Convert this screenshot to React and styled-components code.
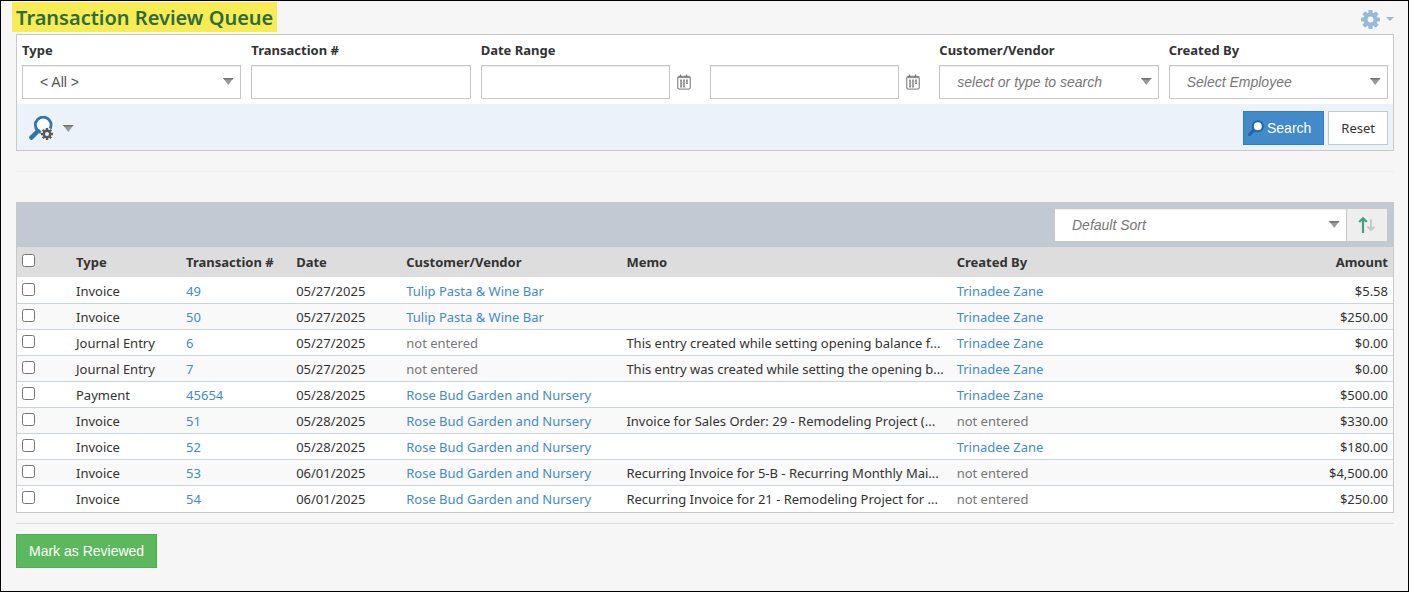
import { useState } from 'react';
import styled, { createGlobalStyle } from 'styled-components';

const colors = {
  link: '#428bca',
  text: '#333',
  muted: '#777',
  border: '#c8c8c8',
};

const bodyFont = '"Noto Sans", "Open Sans", sans-serif';
const controlFont = '"Liberation Sans", Arial, sans-serif';

const transactions = [
  { type: 'Invoice', number: '49', date: '05/27/2025', customer: 'Tulip Pasta & Wine Bar', memo: '', createdBy: 'Trinadee Zane', amount: '$5.58' },
  { type: 'Invoice', number: '50', date: '05/27/2025', customer: 'Tulip Pasta & Wine Bar', memo: '', createdBy: 'Trinadee Zane', amount: '$250.00' },
  { type: 'Journal Entry', number: '6', date: '05/27/2025', customer: '', memo: 'This entry created while setting opening balance f...', createdBy: 'Trinadee Zane', amount: '$0.00' },
  { type: 'Journal Entry', number: '7', date: '05/27/2025', customer: '', memo: 'This entry was created while setting the opening b...', createdBy: 'Trinadee Zane', amount: '$0.00' },
  { type: 'Payment', number: '45654', date: '05/28/2025', customer: 'Rose Bud Garden and Nursery', memo: '', createdBy: 'Trinadee Zane', amount: '$500.00' },
  { type: 'Invoice', number: '51', date: '05/28/2025', customer: 'Rose Bud Garden and Nursery', memo: 'Invoice for Sales Order: 29 - Remodeling Project (...', createdBy: '', amount: '$330.00' },
  { type: 'Invoice', number: '52', date: '05/28/2025', customer: 'Rose Bud Garden and Nursery', memo: '', createdBy: 'Trinadee Zane', amount: '$180.00' },
  { type: 'Invoice', number: '53', date: '06/01/2025', customer: 'Rose Bud Garden and Nursery', memo: 'Recurring Invoice for 5-B - Recurring Monthly Mai...', createdBy: '', amount: '$4,500.00' },
  { type: 'Invoice', number: '54', date: '06/01/2025', customer: 'Rose Bud Garden and Nursery', memo: 'Recurring Invoice for 21 - Remodeling Project for ...', createdBy: '', amount: '$250.00' },
];

function GearIcon({ size, color, hole }) {
  return (
    <svg width={size} height={size} viewBox="0 0 20 20" aria-hidden="true">
      <g fill={color}>
        <circle cx="10" cy="10" r="7.4" />
        {[0, 45, 90, 135].map((angle) => (
          <rect key={angle} x="7.8" y="0" width="4.4" height="20" rx="0.8" transform={`rotate(${angle} 10 10)`} />
        ))}
      </g>
      <circle cx="10" cy="10" r="3.1" fill={hole} />
    </svg>
  );
}

function ArrowIcon() {
  return (
    <svg width="11" height="7" viewBox="0 0 11 7" aria-hidden="true">
      <path d="M0 0H10.5L5.25 7Z" fill="#999" />
      <path d="M0 0H10.5L9.4 1.5H1.1Z" fill="#707070" />
    </svg>
  );
}

function CalendarIcon() {
  return (
    <svg width="14" height="16" viewBox="0 0 14 16" aria-hidden="true">
      <rect x="0.7" y="2.5" width="12.6" height="12.6" rx="1.8" fill="#fff" stroke="#929292" strokeWidth="1.3" />
      <path d="M1 3.2H13" stroke="#8c8c8c" strokeWidth="1.8" />
      <path d="M3.5 0.5V3M9.5 0.5V3" stroke="#777" strokeWidth="1.3" />
      <path d="M4 5.5V13.5M7 5.5V13.5M10 5.5V10" stroke="#8a8a8a" strokeWidth="1.8" />
      <path d="M3 8.2H11M3 10.9H8" stroke="#c2c2c2" strokeWidth="0.8" />
    </svg>
  );
}

function AdvancedSearchIcon() {
  return (
    <svg width="24" height="24" viewBox="0 0 24 24" aria-hidden="true">
      <circle cx="14.2" cy="9" r="7.9" fill="#fff" stroke="#3572b0" strokeWidth="2.8" />
      <path d="M2.4 21.6L9 15" stroke="#3572b0" strokeWidth="4.4" strokeLinecap="round" />
      <circle cx="18" cy="18" r="6.4" fill="#ecf3fb" />
      <g fill="#5a5a5a">
        <circle cx="18" cy="18" r="4.4" />
        {[0, 45, 90, 135].map((angle) => (
          <rect key={angle} x="16.8" y="12" width="2.4" height="12" transform={`rotate(${angle} 18 18)`} />
        ))}
      </g>
      <circle cx="18" cy="18" r="2" fill="#ecf3fb" />
    </svg>
  );
}

function SearchIcon() {
  return (
    <svg width="16" height="16" viewBox="0 0 16 16" aria-hidden="true">
      <path d="M1.5 14.5L5.6 10.4" stroke="#2463a8" strokeWidth="3" strokeLinecap="round" />
      <circle cx="9.8" cy="6.2" r="5" fill="#fff" stroke="#2463a8" strokeWidth="2" />
    </svg>
  );
}

function SortIcon() {
  return (
    <svg width="18" height="18" viewBox="0 0 18 18" aria-hidden="true">
      <path d="M5 17V2M1.2 6L5 2.2L8.8 6" fill="none" stroke="#43a07a" strokeWidth="2.2" />
      <path d="M13 3.5V14M9.5 10.5L13 14L16.5 10.5" fill="none" stroke="#c8c8c8" strokeWidth="2" />
    </svg>
  );
}

function App() {
  const [selected, updateSelected] = useState([]);
  const allSelected = selected.length === transactions.length;

  const toggleAll = () => {
    updateSelected(allSelected ? [] : transactions.map((item) => item.number));
  };

  const toggleRow = (number) => {
    if (selected.includes(number)) {
      updateSelected(selected.filter((item) => item !== number));
    } else {
      updateSelected([...selected, number]);
    }
  };

  return (
    <Page>
      <GlobalStyle />
      <PageHeader>
        <PageTitle>Transaction Review Queue</PageTitle>
        <SettingsButton aria-label="Settings">
          <GearIcon size={19} color="#98b9d7" hole="#f6f6f6" />
          <svg width="8" height="4" viewBox="0 0 8 4" aria-hidden="true">
            <path d="M0 0H8L4 4Z" fill="#98b9d7" />
          </svg>
        </SettingsButton>
      </PageHeader>

      <FilterPanel onSubmit={(e) => e.preventDefault()}>
        <FilterGrid>
          <Field>
            <FieldLabel htmlFor="type">Type</FieldLabel>
            <Combo>
              <ComboSelect id="type">
                <option>&lt; All &gt;</option>
              </ComboSelect>
              <ComboArrow><ArrowIcon /></ComboArrow>
            </Combo>
          </Field>
          <Field>
            <FieldLabel htmlFor="number">Transaction #</FieldLabel>
            <TextInput id="number" type="text" />
          </Field>
          <Field>
            <FieldLabel htmlFor="dateFrom">Date Range</FieldLabel>
            <DateRow>
              <TextInput id="dateFrom" type="text" />
              <IconButton type="button" aria-label="Pick start date"><CalendarIcon /></IconButton>
            </DateRow>
          </Field>
          <Field>
            <DateRow>
              <TextInput type="text" aria-label="End date" />
              <IconButton type="button" aria-label="Pick end date"><CalendarIcon /></IconButton>
            </DateRow>
          </Field>
          <Field>
            <FieldLabel htmlFor="customer">Customer/Vendor</FieldLabel>
            <Combo>
              <ComboInput id="customer" type="text" placeholder="select or type to search" />
              <ComboArrow><ArrowIcon /></ComboArrow>
            </Combo>
          </Field>
          <Field>
            <FieldLabel htmlFor="createdBy">Created By</FieldLabel>
            <Combo>
              <ComboInput id="createdBy" type="text" placeholder="Select Employee" />
              <ComboArrow><ArrowIcon /></ComboArrow>
            </Combo>
          </Field>
        </FilterGrid>
        <FilterActions>
          <AdvancedButton type="button" aria-label="Saved searches">
            <AdvancedSearchIcon />
            <ArrowIcon />
          </AdvancedButton>
          <ButtonGroup>
            <SearchButton type="submit"><SearchIcon />Search</SearchButton>
            <ResetButton type="reset">Reset</ResetButton>
          </ButtonGroup>
        </FilterActions>
      </FilterPanel>

      <Divider $color="#eee" $before={20} $after={30} />

      <TablePanel>
        <TableToolbar>
          <SortBox>
            <ComboSelect $placeholder aria-label="Sort">
              <option>Default Sort</option>
            </ComboSelect>
            <ComboArrow><ArrowIcon /></ComboArrow>
          </SortBox>
          <SortButton type="button" aria-label="Sort direction"><SortIcon /></SortButton>
        </TableToolbar>
        <Table>
          <colgroup>
            <Col $width="54px" />
            <Col $width="8%" />
            <Col $width="8%" />
            <Col $width="8%" />
            <Col $width="16%" />
            <Col $width="24%" />
            <Col $width="20%" />
            <Col />
          </colgroup>
          <thead>
            <tr>
              <HeadCell>
                <Checkbox aria-label="Select all" checked={allSelected} onChange={toggleAll} />
              </HeadCell>
              <HeadCell>Type</HeadCell>
              <HeadCell>Transaction #</HeadCell>
              <HeadCell>Date</HeadCell>
              <HeadCell>Customer/Vendor</HeadCell>
              <HeadCell>Memo</HeadCell>
              <HeadCell>Created By</HeadCell>
              <HeadCell $align="right">Amount</HeadCell>
            </tr>
          </thead>
          <tbody>
            {transactions.map((item) => (
              <Row key={item.number}>
                <Cell>
                  <Checkbox
                    aria-label={`Select ${item.type} ${item.number}`}
                    checked={selected.includes(item.number)}
                    onChange={() => toggleRow(item.number)}
                  />
                </Cell>
                <Cell>{item.type}</Cell>
                <Cell><TableLink href="#">{item.number}</TableLink></Cell>
                <Cell>{item.date}</Cell>
                <Cell>
                  {item.customer ? <TableLink href="#">{item.customer}</TableLink> : <Muted>not entered</Muted>}
                </Cell>
                <Cell>{item.memo}</Cell>
                <Cell>
                  {item.createdBy ? <TableLink href="#">{item.createdBy}</TableLink> : <Muted>not entered</Muted>}
                </Cell>
                <Cell $align="right">{item.amount}</Cell>
              </Row>
            ))}
          </tbody>
        </Table>
      </TablePanel>

      <Divider $color="#ddd" $before={10} $after={10} />
      <ReviewButton type="button">Mark as Reviewed</ReviewButton>
    </Page>
  );
}

export default App;

const GlobalStyle = createGlobalStyle`
  *, *::before, *::after {
    box-sizing: border-box;
  }
  body {
    margin: 0;
    background: #f6f6f6;
    color: ${colors.text};
    font-family: ${bodyFont};
    font-size: 13px;
    line-height: 20px;
  }
`;

const Page = styled.div`
  min-height: 100vh;
  padding: 1px 14px 23px 15px;
  border: 1px solid #000;
`;

const PageHeader = styled.header`
  display: flex;
  align-items: center;
  justify-content: space-between;
  margin-bottom: 2px;
`;

const PageTitle = styled.h1`
  margin: 0 0 0 -4px;
  padding: 2px 4px 0;
  background: #f7ec54;
  color: #2f6b3c;
  font-size: 20px;
  font-weight: 600;
  line-height: 28px;
`;

const SettingsButton = styled.button`
  display: flex;
  align-items: center;
  gap: 6px;
  padding: 4px 0 0;
  border: 0;
  background: none;
  cursor: pointer;
`;

const FilterPanel = styled.form`
  border: 1px solid ${colors.border};
  background: #fff;
`;

const FilterGrid = styled.div`
  display: grid;
  grid-template-columns: repeat(6, 1fr);
  gap: 10px;
  padding: 5px;
`;

const Field = styled.div`
  display: flex;
  flex-direction: column;
  justify-content: flex-end;
  min-width: 0;
`;

const FieldLabel = styled.label`
  margin-bottom: 5px;
  font-weight: 700;
`;

const TextInput = styled.input`
  width: 100%;
  min-width: 0;
  height: 34px;
  padding: 6px 12px;
  border: 1px solid ${colors.border};
  background: #fff;
  box-shadow: inset 0 1px 1px rgba(0, 0, 0, 0.075);
  color: #555;
  font-family: ${controlFont};
  font-size: 14px;
`;

const DateRow = styled.div`
  display: flex;
  align-items: center;
  padding-right: 8px;
`;

const IconButton = styled.button`
  display: flex;
  flex: none;
  justify-content: center;
  width: 22px;
  padding: 0 0 0 6px;
  border: 0;
  background: none;
  cursor: pointer;
`;

const Combo = styled.div`
  position: relative;
  display: flex;
`;

const ComboInput = styled(TextInput)`
  padding: 6px 24px 6px 17px;

  &::placeholder {
    color: ${colors.muted};
    font-style: italic;
    opacity: 1;
  }
`;

const ComboSelect = styled.select`
  width: 100%;
  height: 34px;
  padding: 0 24px 0 17px;
  appearance: none;
  border: 1px solid ${colors.border};
  border-radius: 0;
  background: #fff;
  box-shadow: inset 0 1px 1px rgba(0, 0, 0, 0.075);
  color: ${(props) => (props.$placeholder ? colors.muted : '#555')};
  font-family: ${controlFont};
  font-size: 14px;
  font-style: ${(props) => (props.$placeholder ? 'italic' : 'normal')};
`;

const ComboArrow = styled.span`
  position: absolute;
  top: 0;
  right: 7px;
  bottom: 2px;
  display: flex;
  align-items: center;
  pointer-events: none;
`;

const FilterActions = styled.div`
  display: flex;
  align-items: center;
  justify-content: space-between;
  padding: 7px 5px 5px;
  background: #ebf2fa;
`;

const AdvancedButton = styled.button`
  display: flex;
  align-items: center;
  gap: 10px;
  padding: 0 7px;
  border: 0;
  background: none;
  cursor: pointer;
`;

const ButtonGroup = styled.div`
  display: flex;
  gap: 4px;
`;

const Button = styled.button`
  display: flex;
  align-items: center;
  height: 34px;
  padding: 0 12px;
  border: 1px solid;
  font-family: ${controlFont};
  font-size: 14px;
  line-height: 20px;
  cursor: pointer;
`;

const SearchButton = styled(Button)`
  gap: 3px;
  padding-left: 4px;
  border-color: #357ebd;
  background: #428bca;
  color: #fff;
`;

const ResetButton = styled(Button)`
  border-color: ${colors.border};
  background: #fff;
  color: ${colors.text};
  font-family: ${bodyFont};
  font-size: 13px;
`;

const ReviewButton = styled(Button)`
  border-color: #4cae4c;
  background: #5cb85c;
  color: #fff;
`;

const Divider = styled.hr`
  height: 1px;
  margin: ${(props) => props.$before}px 0 ${(props) => props.$after}px;
  border: 0;
  background: ${(props) => props.$color};
`;

const TablePanel = styled.section`
  border: 1px solid ${colors.border};
  background: #fff;
`;

const TableToolbar = styled.div`
  display: flex;
  justify-content: flex-end;
  padding: 5px;
  background: #c1c9d3;
`;

const SortBox = styled(Combo)`
  width: 293px;
`;

const SortButton = styled.button`
  display: flex;
  align-items: center;
  justify-content: center;
  width: 41px;
  border: 1px solid ${colors.border};
  border-left: 0;
  background: #eee;
  cursor: pointer;
`;

const Table = styled.table`
  width: 100%;
  table-layout: fixed;
  border-spacing: 0;
`;

const Col = styled.col`
  width: ${(props) => props.$width || 'auto'};
`;

const HeadCell = styled.th`
  height: 31px;
  padding: 0 5px;
  border-bottom: 1px solid #fff;
  background: #ddd;
  font-weight: 700;
  text-align: ${(props) => props.$align || 'left'};
  white-space: nowrap;
`;

const Cell = styled.td`
  height: 26px;
  padding: 0 5px;
  border-bottom: 1px solid #cbd5df;
  text-align: ${(props) => props.$align || 'left'};
  white-space: nowrap;
`;

const Row = styled.tr`
  &:nth-child(even) {
    background: #f9f9f9;
  }

  &:last-child ${Cell} {
    border-bottom: 0;
  }
`;

const Checkbox = styled.input.attrs({ type: 'checkbox' })`
  display: block;
  width: 13px;
  height: 13px;
  margin: 0 0 3px;
`;

const TableLink = styled.a`
  color: ${colors.link};
  text-decoration: none;
`;

const Muted = styled.span`
  color: ${colors.muted};
`;
